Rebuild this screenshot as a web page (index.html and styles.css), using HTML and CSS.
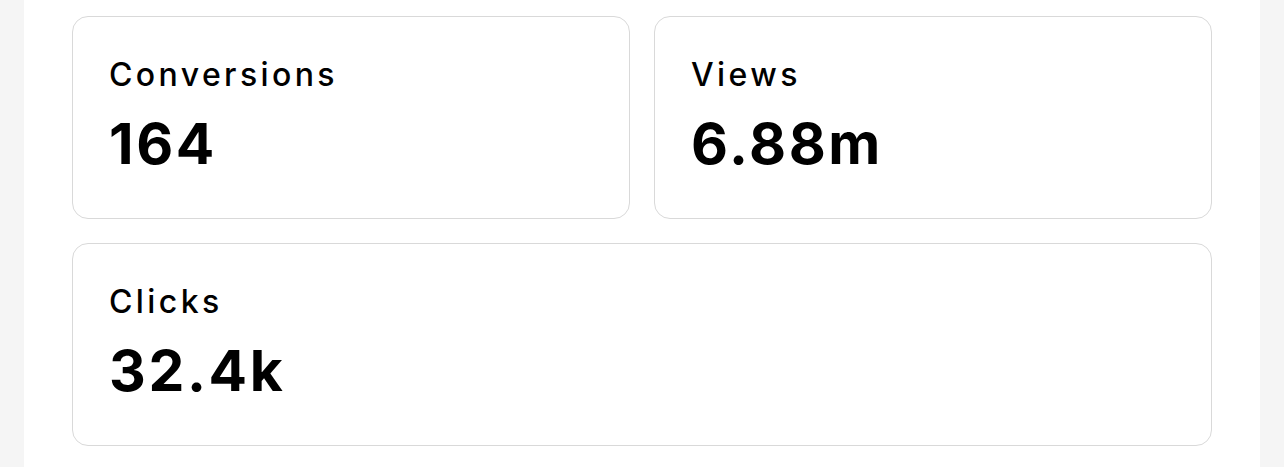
FILE: index.html
```html
<!DOCTYPE html>
<html>
<head>
<meta charset="utf-8">
<link rel="stylesheet" href="styles.css">
</head>
<body>
<div class="panel">
  <div class="grid">
    <div class="card">
      <div class="label">Conversions</div>
      <div class="value">164</div>
    </div>
    <div class="card">
      <div class="label">Views</div>
      <div class="value">6.88m</div>
    </div>
    <div class="card wide">
      <div class="label">Clicks</div>
      <div class="value">32.4k</div>
    </div>
  </div>
</div>
</body>
</html>
```
FILE: styles.css
```css
html, body {
  margin: 0;
  padding: 0;
  background: #f5f5f5;
  height: 100%;
}
body {
  font-family: Inter, "Noto Sans", sans-serif;
  color: #000;
}
.panel {
  margin: 0 24px;
  background: #fff;
  min-height: 100%;
  padding: 16px 48px;
  box-sizing: border-box;
}
.grid {
  display: grid;
  grid-template-columns: 1fr 1fr;
  gap: 24px;
}
.card {
  border: 1px solid #d9d9d9;
  border-radius: 16px;
  height: 203px;
  box-sizing: border-box;
  padding: 36px 36px;
}
.wide {
  grid-column: 1 / span 2;
}
.label {
  font-size: 32px;
  line-height: 44px;
  font-weight: 500;
  letter-spacing: 3.4px;
}
.value {
  margin-top: 12px;
  font-size: 57px;
  line-height: 69px;
  font-weight: 700;
  letter-spacing: 2.6px;
}
```
